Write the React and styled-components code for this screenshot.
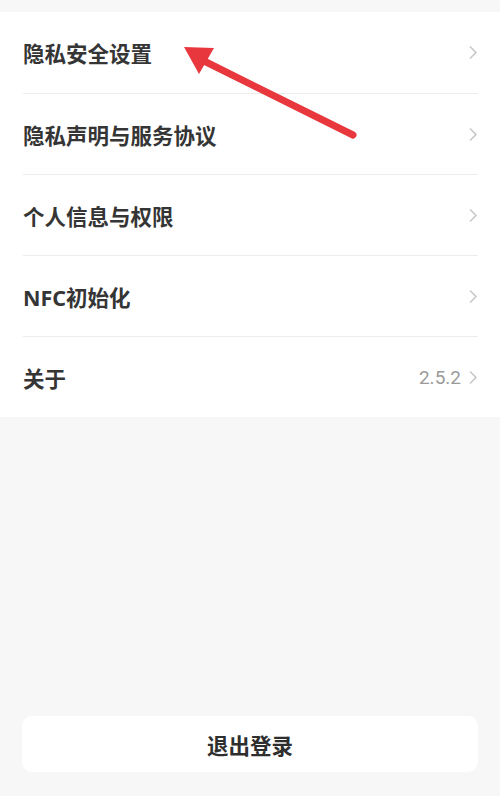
import React from "react";
import styled, { createGlobalStyle } from "styled-components";

const GlobalStyle = createGlobalStyle`
  html, body {
    margin: 0;
    padding: 0;
    background: #f7f7f7;
  }
  body {
    font-family: "Noto Sans", "Noto Sans CJK SC", sans-serif;
  }
`;

const Page = styled.div`
  position: relative;
  width: 500px;
  height: 796px;
  display: flex;
  flex-direction: column;
  background: #f7f7f7;
  overflow: hidden;
`;

const Panel = styled.div`
  margin-top: 12px;
  background: #ffffff;
  padding: 0 22px 0 23px;
`;

const Row = styled.div`
  height: 81px;
  display: flex;
  align-items: center;
  justify-content: space-between;
  border-top: ${({ $first }) => ($first ? "none" : "1px solid #ececec")};
  box-sizing: border-box;
`;

const Label = styled.span`
  font-size: 21.5px;
  font-weight: 700;
  color: #353535;
`;

const Right = styled.div`
  display: flex;
  align-items: center;
  gap: 7px;
`;

const Value = styled.span`
  font-family: "Roboto", "Noto Sans", sans-serif;
  font-size: 19px;
  color: #9a9a9a;
`;

const Chevron = () => (
  <svg width="10" height="15" viewBox="0 0 10 15">
    <path d="M2 1.5 L8 7.5 L2 13.5" fill="none" stroke="#c8c8c8" strokeWidth="1.6" />
  </svg>
);

const Spacer = styled.div`
  flex: 1;
`;

const LogoutButton = styled.div`
  margin: 0 22px 24px 22px;
  height: 56px;
  border-radius: 10px;
  background: #ffffff;
  display: flex;
  align-items: center;
  justify-content: center;
  font-size: 21.5px;
  font-weight: 700;
  color: #2e2e2e;
`;

const Arrow = styled.svg`
  position: absolute;
  left: 0;
  top: 0;
  pointer-events: none;
`;

const items = [
  { label: "隐私安全设置" },
  { label: "隐私声明与服务协议" },
  { label: "个人信息与权限" },
  { label: "NFC初始化" },
  { label: "关于", value: "2.5.2" },
];

export default function App() {
  return (
    <Page>
      <GlobalStyle />
      <Panel>
        {items.map((item, i) => (
          <Row key={item.label} $first={i === 0}>
            <Label>{item.label}</Label>
            <Right>
              {item.value && <Value>{item.value}</Value>}
              <Chevron />
            </Right>
          </Row>
        ))}
      </Panel>
      <Spacer />
      <LogoutButton>退出登录</LogoutButton>

      {/* red annotation arrow */}
      <Arrow width="500" height="796" viewBox="0 0 500 796">
        <line x1="353" y1="135" x2="202" y2="60" stroke="#e8383d" strokeWidth="7" strokeLinecap="round" />
        <polygon points="184,47 214,48 199,74" fill="#e8383d" />
      </Arrow>
    </Page>
  );
}
